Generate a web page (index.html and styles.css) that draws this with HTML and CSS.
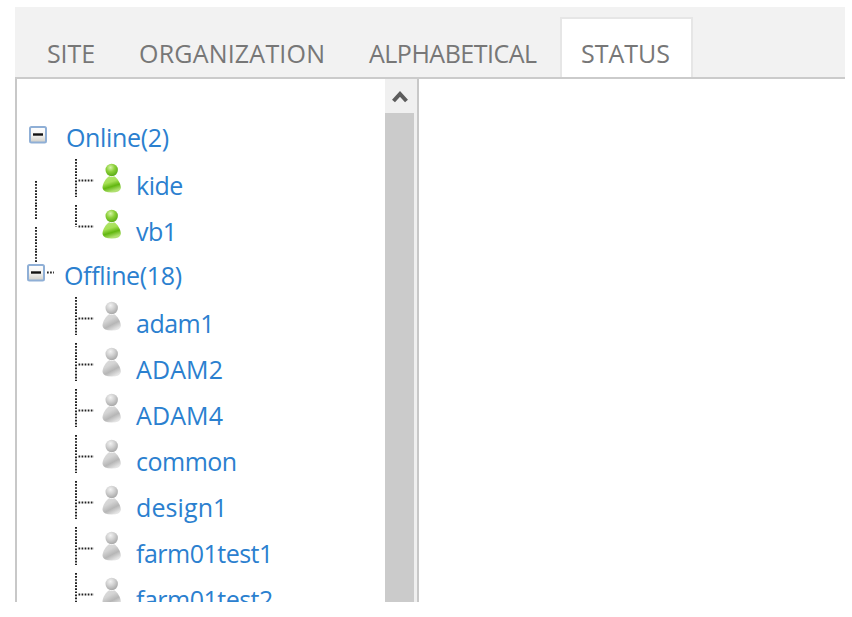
FILE: index.html
```
<!DOCTYPE html>
<html lang="en">
<head>
    <meta charset="UTF-8">
    <title>Users - Status</title>
    <link rel="stylesheet" href="styles.css">
</head>
<body>

    <!-- Shared icons -->
    <svg class="defs" width="0" height="0">
        <defs>
            <linearGradient id="greenBody" x1="0" y1="0" x2="0.35" y2="1">
                <stop offset="0" stop-color="#b5e676"/>
                <stop offset="0.45" stop-color="#a6e055"/>
                <stop offset="0.72" stop-color="#62b710"/>
                <stop offset="1" stop-color="#b0e070"/>
            </linearGradient>
            <radialGradient id="greenHead" cx="0.4" cy="0.3" r="0.7">
                <stop offset="0" stop-color="#d6f3a8"/>
                <stop offset="0.5" stop-color="#8bd038"/>
                <stop offset="1" stop-color="#5aab16"/>
            </radialGradient>
            <linearGradient id="greyBody" x1="0" y1="0" x2="0.6" y2="1">
                <stop offset="0" stop-color="#dedede"/>
                <stop offset="0.4" stop-color="#d4d4d4"/>
                <stop offset="0.7" stop-color="#b6b6b6"/>
                <stop offset="1" stop-color="#e4e4e4"/>
            </linearGradient>
            <radialGradient id="greyHead" cx="0.4" cy="0.3" r="0.7">
                <stop offset="0" stop-color="#f2f2f2"/>
                <stop offset="0.5" stop-color="#d0d0d0"/>
                <stop offset="1" stop-color="#a8a8a8"/>
            </radialGradient>
            <linearGradient id="toggleFill" x1="0" y1="0" x2="0" y2="1">
                <stop offset="0" stop-color="#ffffff"/>
                <stop offset="0.5" stop-color="#f4f4f2"/>
                <stop offset="1" stop-color="#cfcdc6"/>
            </linearGradient>
            <path id="body" d="M6.8 13.2 Q9.2 14.6 11.6 13.2 C15 15 18.4 20.5 18.4 25 Q17.5 29.5 9.2 29.5 Q0.9 29.5 0 25 C0 20.5 3.4 15 6.8 13.2Z"/>
            <g id="online">
                <use href="#body" fill="url(#greenBody)"/>
                <circle cx="9.2" cy="7" r="6.2" fill="url(#greenHead)"/>
            </g>
            <g id="offline">
                <use href="#body" fill="url(#greyBody)"/>
                <circle cx="9.2" cy="7" r="6.2" fill="url(#greyHead)"/>
            </g>
            <g id="minus">
                <rect x="1" y="1" width="16" height="15.5" rx="1.5" fill="url(#toggleFill)" stroke="#8fafd6" stroke-width="2"/>
                <path d="M4 8.5H14" stroke="#111" stroke-width="2.4"/>
            </g>
            <g id="tee" class="dots">
                <path d="M49 0V38"/>
                <path d="M51.5 21.5H67"/>
            </g>
            <g id="corner" class="dots">
                <path d="M49 0V22"/>
                <path d="M51.5 21.5H67"/>
            </g>
        </defs>
    </svg>

    <div class="page">
        <div class="tabs">
            <a class="tab site">SITE</a>
            <a class="tab organization">ORGANIZATION</a>
            <a class="tab alphabetical">ALPHABETICAL</a>
            <a class="tab active">STATUS</a>
        </div>

        <div class="content">
            <div class="tree">
                <div class="group">
                    <svg class="toggle" width="48" height="46"><use href="#minus" x="2" y="13"/></svg>
                    <span class="label">Online(2)</span>
                </div>
                <div class="item">
                    <svg width="109" height="46"><use href="#tee"/><path class="dots" d="M9 22V46"/><use href="#online" x="75.5" y="4"/></svg>
                    <span class="label">kide</span>
                </div>
                <div class="item">
                    <svg width="109" height="46"><use href="#corner"/><path class="dots" d="M9 0V14M9 22V46"/><use href="#online" x="75.5" y="4"/></svg>
                    <span class="label">vb1</span>
                </div>
                <div class="group">
                    <svg class="toggle" width="46" height="46"><path class="dots" d="M9 0V12M20 21.5H27"/><use href="#minus" y="13"/></svg>
                    <span class="label">Offline(18)</span>
                </div>
                <div class="item">
                    <svg width="109" height="46"><use href="#tee"/><use href="#offline" x="75.5" y="4"/></svg>
                    <span class="label">adam1</span>
                </div>
                <div class="item">
                    <svg width="109" height="46"><use href="#tee"/><use href="#offline" x="75.5" y="4"/></svg>
                    <span class="label wide">ADAM2</span>
                </div>
                <div class="item">
                    <svg width="109" height="46"><use href="#tee"/><use href="#offline" x="75.5" y="4"/></svg>
                    <span class="label wide">ADAM4</span>
                </div>
                <div class="item">
                    <svg width="109" height="46"><use href="#tee"/><use href="#offline" x="75.5" y="4"/></svg>
                    <span class="label">common</span>
                </div>
                <div class="item">
                    <svg width="109" height="46"><use href="#tee"/><use href="#offline" x="75.5" y="4"/></svg>
                    <span class="label wide">design1</span>
                </div>
                <div class="item">
                    <svg width="109" height="46"><use href="#tee"/><use href="#offline" x="75.5" y="4"/></svg>
                    <span class="label">farm01test1</span>
                </div>
                <div class="item">
                    <svg width="109" height="46"><use href="#tee"/><use href="#offline" x="75.5" y="4"/></svg>
                    <span class="label">farm01test2</span>
                </div>
            </div>

            <div class="scrollbar">
                <div class="scroll-up">
                    <svg width="16" height="14"><path d="M1.5 12L8 5L14.5 12" fill="none" stroke="#5c5c5c" stroke-width="4"/></svg>
                </div>
                <div class="thumb"></div>
            </div>
        </div>
    </div>

</body>
</html>
```
FILE: styles.css
```
body {
    margin: 0;
    background-color: white;
    font-family: "Open Sans", "Noto Sans", sans-serif;
    overflow: hidden;
}

.defs {
    display: block;
}

.page {
    width: 830px;
    height: 595px;
    margin: 7px 0 0 15px;
    overflow: hidden;
}

.tabs {
    display: flex;
    align-items: flex-end;
    box-sizing: border-box;
    height: 72px;
    padding-left: 11px;
    background-color: #f2f2f2;
    border-bottom: 2px solid #cbcbcb;
}

.tab {
    box-sizing: border-box;
    height: 60px;
    padding-left: 21px;
    line-height: 73px;
    font-size: 25px;
    letter-spacing: -0.5px;
    color: #777;
    white-space: nowrap;
}

.site {
    width: 92px;
    letter-spacing: -0.1px;
}

.organization {
    width: 230px;
    letter-spacing: 0.2px;
}

.alphabetical {
    width: 212px;
}

.active {
    width: 133px;
    padding-left: 19px;
    line-height: 69px;
    letter-spacing: 0;
    background-color: white;
    border: 2px solid #e6e6e6;
    border-bottom: none;
}

.content {
    display: flex;
    box-sizing: border-box;
    width: 404px;
    height: 523px;
    border-left: 2px solid #c8c8c8;
    border-right: 2px solid #c8c8c8;
}

.tree {
    width: 368px;
    padding: 34px 0 0 10px;
    box-sizing: border-box;
    overflow: hidden;
}

.group,
.item {
    display: flex;
    height: 46px;
}

.group svg,
.item svg {
    flex: none;
}

.toggle {
    margin-right: -9px;
}

.label {
    line-height: 53px;
    font-size: 25px;
    letter-spacing: -0.5px;
    color: #2b80cf;
    white-space: nowrap;
}

.group .label {
    line-height: 49px;
    letter-spacing: -0.35px;
}

.label.wide {
    letter-spacing: 0.1px;
}

.dots {
    fill: none;
    stroke: #222;
    stroke-width: 2;
    stroke-dasharray: 1.7 1.37;
}

.scrollbar {
    display: flex;
    flex-direction: column;
    width: 32px;
    background-color: #f0f0f0;
}

.scroll-up {
    display: flex;
    align-items: center;
    justify-content: center;
    width: 30px;
    height: 34px;
}

.thumb {
    flex: 1;
    width: 29px;
    background-color: #cbcbcb;
}
```
